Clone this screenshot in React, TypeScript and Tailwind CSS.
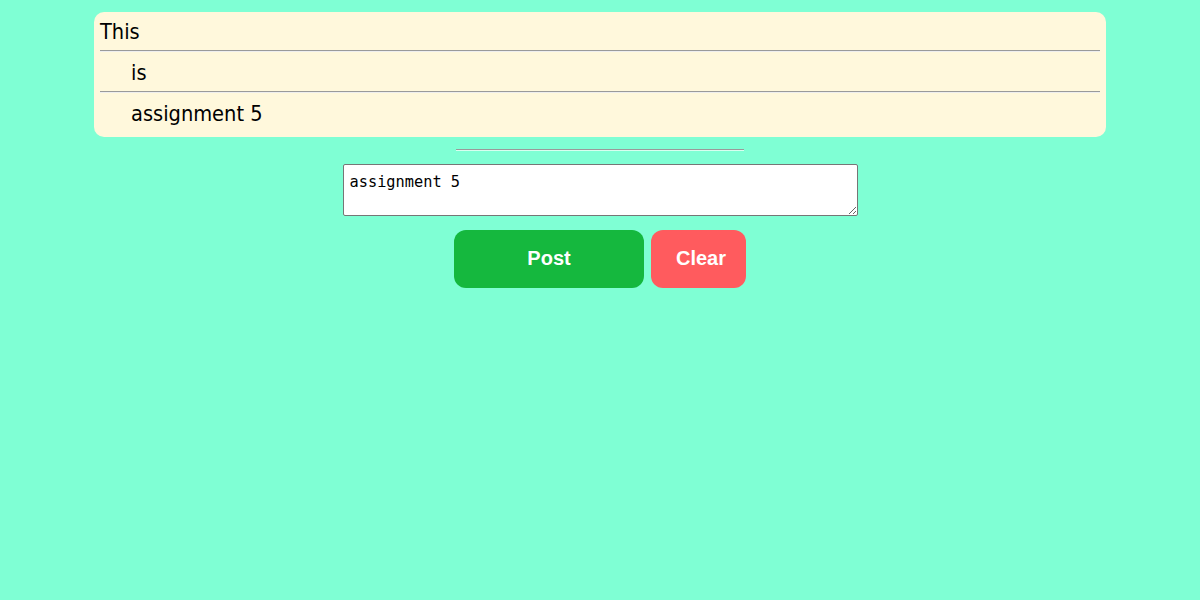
export default function App() {
  return (
    <div className="min-h-[600px] w-full bg-[#7fffd4] pt-[12px] flex flex-col items-center">
      <div
        className="w-[1012px] bg-[#fff8dc] rounded-[10px] px-[6px] text-[21.6px] leading-[24px] text-black"
        style={{ fontFamily: '"DejaVu Sans Condensed", "DejaVu Sans", sans-serif', fontStretch: "semi-condensed" }}
      >
        <div className="h-[38px] pt-[8px]">This</div>
        <hr className="border-t border-b border-t-[#9a9a9a] border-b-[#eeeeee]" />
        <div className="h-[39px] pt-[9px] pl-[31px]">is</div>
        <hr className="border-t border-b border-t-[#9a9a9a] border-b-[#eeeeee]" />
        <div className="h-[44px] pt-[9px] pl-[31px]">assignment 5</div>
      </div>

      <hr className="w-[288px] mt-[12px] border-t border-b border-t-[#9a9a9a] border-b-[#d8fff0]" />

      <textarea
        className="mt-[13px] w-[515px] h-[52px] bg-white border border-[#767676] rounded-[2px] pl-[6px] pr-[4px] pt-[8px] pb-[3px] text-[15.3px] leading-[18px] text-black resize"
        style={{ fontFamily: '"DejaVu Sans Mono", monospace' }}
        defaultValue="assignment 5"
      />

      <div className="mt-[14px] flex gap-[7px]" style={{ fontFamily: '"Liberation Sans", Arial, sans-serif' }}>
        <button className="w-[190px] h-[58px] rounded-[12px] bg-[#15b83e] text-white text-[20px] font-bold pb-[2px]">
          Post
        </button>
        <button className="w-[95px] h-[58px] rounded-[12px] bg-[#ff5b5e] text-white text-[20px] font-bold pl-[5px] pb-[2px]">
          Clear
        </button>
      </div>
    </div>
  );
}
